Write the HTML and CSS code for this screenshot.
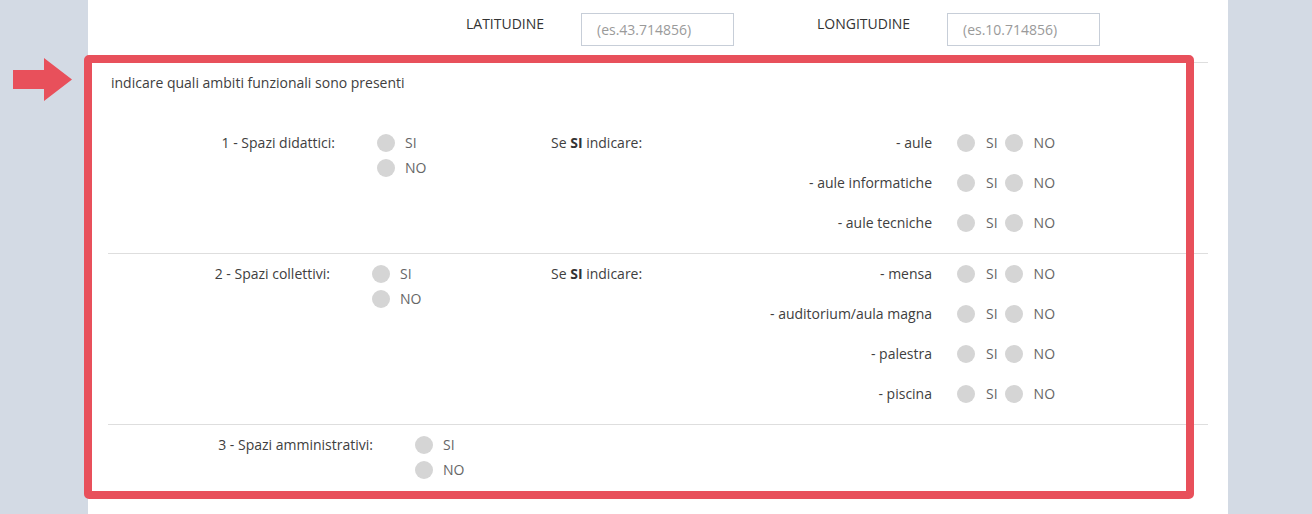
FILE: index.html
```html
<!DOCTYPE html>
<html lang="it">
<head>
<meta charset="utf-8">
<title>Ambiti funzionali</title>
<link rel="stylesheet" href="styles.css">
</head>
<body>
<div class="page">
  <main class="panel">
    <div class="coords">
      <label class="coord-label" for="lat">LATITUDINE</label>
      <input id="lat" class="coord-input" type="text" placeholder="(es.43.714856)">
      <label class="coord-label coord-label--lon" for="lon">LONGITUDINE</label>
      <input id="lon" class="coord-input" type="text" placeholder="(es.10.714856)">
    </div>

    <p class="intro">indicare quali ambiti funzionali sono presenti</p>

    <section class="area area--didattici">
      <div class="area-main">
        <span class="area-label">1 - Spazi didattici:</span>
        <div class="choice-stack">
          <label class="choice"><input class="dot" type="radio" name="did">SI</label>
          <label class="choice"><input class="dot" type="radio" name="did">NO</label>
        </div>
      </div>
      <div class="area-if">Se <b>SI</b> indicare:</div>
      <ul class="sub-list">
        <li class="sub-item">
          <span class="sub-label">- aule</span>
          <label class="choice choice--yes"><input class="dot" type="radio" name="aule">SI</label>
          <label class="choice choice--no"><input class="dot" type="radio" name="aule">NO</label>
        </li>
        <li class="sub-item">
          <span class="sub-label">- aule informatiche</span>
          <label class="choice choice--yes"><input class="dot" type="radio" name="info">SI</label>
          <label class="choice choice--no"><input class="dot" type="radio" name="info">NO</label>
        </li>
        <li class="sub-item">
          <span class="sub-label">- aule tecniche</span>
          <label class="choice choice--yes"><input class="dot" type="radio" name="tec">SI</label>
          <label class="choice choice--no"><input class="dot" type="radio" name="tec">NO</label>
        </li>
      </ul>
    </section>

    <section class="area area--collettivi">
      <div class="area-main">
        <span class="area-label">2 - Spazi collettivi:</span>
        <div class="choice-stack">
          <label class="choice"><input class="dot" type="radio" name="col">SI</label>
          <label class="choice"><input class="dot" type="radio" name="col">NO</label>
        </div>
      </div>
      <div class="area-if">Se <b>SI</b> indicare:</div>
      <ul class="sub-list">
        <li class="sub-item">
          <span class="sub-label">- mensa</span>
          <label class="choice choice--yes"><input class="dot" type="radio" name="mensa">SI</label>
          <label class="choice choice--no"><input class="dot" type="radio" name="mensa">NO</label>
        </li>
        <li class="sub-item">
          <span class="sub-label">- auditorium/aula magna</span>
          <label class="choice choice--yes"><input class="dot" type="radio" name="aud">SI</label>
          <label class="choice choice--no"><input class="dot" type="radio" name="aud">NO</label>
        </li>
        <li class="sub-item">
          <span class="sub-label">- palestra</span>
          <label class="choice choice--yes"><input class="dot" type="radio" name="pal">SI</label>
          <label class="choice choice--no"><input class="dot" type="radio" name="pal">NO</label>
        </li>
        <li class="sub-item">
          <span class="sub-label">- piscina</span>
          <label class="choice choice--yes"><input class="dot" type="radio" name="pis">SI</label>
          <label class="choice choice--no"><input class="dot" type="radio" name="pis">NO</label>
        </li>
      </ul>
    </section>

    <section class="area area--amministrativi">
      <div class="area-main">
        <span class="area-label">3 - Spazi amministrativi:</span>
        <div class="choice-stack">
          <label class="choice"><input class="dot" type="radio" name="amm">SI</label>
          <label class="choice"><input class="dot" type="radio" name="amm">NO</label>
        </div>
      </div>
    </section>
  </main>

  <!-- highlight frame and pointer drawn over the form -->
  <div class="callout"></div>
  <svg class="callout-arrow" width="60" height="43" viewBox="0 0 60 43" aria-hidden="true">
    <polygon points="0,12 31,12 31,0 59,21.5 31,43 31,31 0,31" fill="#e8505b"/>
  </svg>
</div>
</body>
</html>
```

FILE: styles.css
```css
* {
  box-sizing: border-box;
}

html, body {
  margin: 0;
  padding: 0;
}

body {
  background: #d3dae4;
  font-family: "Open Sans", "Liberation Sans", sans-serif;
  font-size: 14px;
  line-height: 18px;
  color: #404040;
}

.page {
  position: relative;
  width: 1312px;
  height: 514px;
  overflow: hidden;
}

.panel {
  margin-left: 88px;
  width: 1140px;
  height: 514px;
  background: #fff;
  padding: 0 20px;
}

/* coordinates row */
.coords {
  display: flex;
  align-items: flex-start;
  padding: 13px 0 16px 358px;
  border-bottom: 1px solid #dedede;
}

.coord-label {
  width: 115px;
  margin-top: 2px;
  color: #333;
}

.coord-label--lon {
  width: 130px;
  margin-left: 83px;
}

.coord-input {
  width: 153px;
  height: 33px;
  margin: 0;
  padding: 0 0 0 15px;
  border: 1px solid #c7ced8;
  border-radius: 0;
  font: inherit;
  font-size: 14px;
  color: #555;
  background: #fff;
  outline: none;
}

.coord-input::placeholder {
  color: #9a9a9a;
}

.intro {
  margin: 11px 0 31px;
  padding-left: 3px;
}

/* functional areas */
.area {
  display: flex;
  align-items: flex-start;
  padding-bottom: 10px;
  border-bottom: 1px solid #dedede;
}

.area--amministrativi {
  border-bottom: 0;
}

.area-main {
  display: flex;
  align-items: flex-start;
  width: 443px;
  padding-top: 11px;
}

.area-label {
  flex: none;
  text-align: right;
  margin-right: 42px;
}

.area--didattici .area-label { width: 227px; }
.area--collettivi .area-label { width: 222px; }
.area--amministrativi .area-label { width: 265px; }

.choice-stack {
  display: flex;
  flex-direction: column;
}

.choice {
  display: flex;
  align-items: center;
  height: 18px;
  color: #666;
}

.choice-stack .choice + .choice {
  margin-top: 6.5px;
}

.dot {
  -webkit-appearance: none;
  appearance: none;
  flex: none;
  width: 18px;
  height: 18px;
  margin: 0 10px 0 0;
  border: 0;
  border-radius: 50%;
  background: #d5d5d5;
}

.area-if {
  width: 150px;
  padding-top: 11px;
}

.area-if b {
  font-weight: 700;
  color: #333;
}

.sub-list {
  list-style: none;
  margin: 0;
  padding: 0;
}

.sub-item {
  display: flex;
  align-items: center;
  height: 40px;
}

.sub-label {
  width: 231px;
  text-align: right;
  margin-right: 25px;
}

.sub-item .dot {
  margin-right: 11px;
}

.sub-item .choice--no {
  margin-left: 7px;
}

/* highlight frame */
.callout {
  position: absolute;
  left: 84px;
  top: 55px;
  width: 1110px;
  height: 444px;
  border: 8px solid #e8505b;
  border-radius: 5px;
  pointer-events: none;
}

.callout-arrow {
  position: absolute;
  left: 13px;
  top: 58px;
}
```
